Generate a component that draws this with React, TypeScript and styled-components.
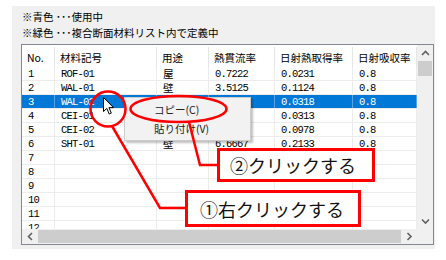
import styled, { createGlobalStyle } from "styled-components";

const GlobalStyle = createGlobalStyle`
  html, body {
    margin: 0;
    padding: 0;
    background: #ffffff;
  }
  body {
    font-family: "Noto Sans CJK JP", "Noto Sans", sans-serif;
    color: #000;
  }
`;

const UI_FONT = `"Noto Sans CJK JP", "Noto Sans", sans-serif`;
const DATA_FONT = `"Liberation Mono", "Noto Sans CJK JP", monospace`;
const RED = "#ff0000";

const Page = styled.div`
  position: relative;
  width: 446px;
  height: 260px;
  overflow: hidden;
`;

const Panel = styled.div`
  margin: 6px 0 0 12px;
  width: 423px;
  height: 243px;
  box-sizing: border-box;
  padding: 3px 0 0 9px;
  background: #f0f0f0;
`;

const Note = styled.div`
  padding-left: 1px;
  font-family: ${UI_FONT};
  font-size: 10.5px;
  line-height: 16px;
  height: 16px;
  white-space: nowrap;
`;

const Table = styled.div`
  margin-top: 3px;
  width: 413px;
  height: 201px;
  box-sizing: border-box;
  border: 1px solid #828790;
  background: #ffffff;
  display: grid;
  grid-template-columns: 395px 16px;
  grid-template-rows: 184px 15px;
`;

const GridArea = styled.div`
  overflow: hidden;
  background: #ffffff;
`;

const COLS = "33px 102px 52px 66px 78px 64px";

const HeaderRow = styled.div`
  display: grid;
  grid-template-columns: ${COLS};
  height: 22px;
`;

const HeaderCell = styled.div`
  display: flex;
  align-items: center;
  padding-left: 5px;
  box-sizing: border-box;
  font-family: ${UI_FONT};
  font-size: 10.5px;
  white-space: nowrap;
  overflow: hidden;
  border-right: 1px solid #e5e5e5;
  margin: 2px 0 0;
`;

const Row = styled.div<{ $selected?: boolean }>`
  display: grid;
  grid-template-columns: ${COLS};
  height: 14px;
  box-sizing: border-box;
  border-bottom: 1px solid #ececec;
  background: ${(p) => (p.$selected ? "#0078d7" : "#ffffff")};
  color: ${(p) => (p.$selected ? "#ffffff" : "#000000")};
`;

const Cell = styled.div<{ $selected?: boolean }>`
  display: flex;
  align-items: center;
  padding-left: 6px;
  box-sizing: border-box;
  font-family: ${DATA_FONT};
  font-size: 10.5px;
  letter-spacing: -0.8px;
  white-space: nowrap;
  overflow: hidden;
  border-right: 1px solid ${(p) => (p.$selected ? "#5aa3e0" : "#ececec")};
`;

const VScroll = styled.div`
  background: #f0f0f0;
  display: flex;
  flex-direction: column;
`;

const HScroll = styled.div`
  background: #f0f0f0;
  display: flex;
  align-items: center;
`;

const ScrollButton = styled.div<{ $w: number; $h: number }>`
  width: ${(p) => p.$w}px;
  height: ${(p) => p.$h}px;
  flex: none;
  display: flex;
  align-items: center;
  justify-content: center;
`;

const VThumb = styled.div`
  margin-left: 1px;
  width: 14px;
  height: 15px;
  background: #cdcdcd;
`;

const VTrack = styled.div`
  flex: 1;
`;

const HThumb = styled.div`
  flex: 1;
  height: 13px;
  background: #cdcdcd;
`;

const Corner = styled.div`
  background: #f0f0f0;
`;

const Menu = styled.div`
  position: absolute;
  left: 124px;
  top: 97px;
  width: 127px;
  box-sizing: border-box;
  padding: 2px 0;
  background: #f2f2f2;
  border: 1px solid #cccccc;
  box-shadow: 2px 2px 2px rgba(0, 0, 0, 0.25);
`;

const MenuItem = styled.div`
  height: 19px;
  display: flex;
  align-items: center;
  padding-left: 29px;
  font-family: ${UI_FONT};
  font-size: 10.5px;
  color: #222;
  white-space: nowrap;
`;

const Cursor = styled.svg`
  position: absolute;
  left: 103px;
  top: 97px;
`;

const Marks = styled.svg`
  position: absolute;
  left: 0;
  top: 0;
  pointer-events: none;
`;

const Callout = styled.div<{ $x: number; $y: number; $w: number; $h: number; $pad: number }>`
  position: absolute;
  left: ${(p) => p.$x}px;
  top: ${(p) => p.$y}px;
  width: ${(p) => p.$w}px;
  height: ${(p) => p.$h}px;
  box-sizing: border-box;
  border: 3px solid ${RED};
  background: #ffffff;
  display: flex;
  align-items: center;
  padding-left: ${(p) => p.$pad}px;
  font-family: ${UI_FONT};
  font-size: 18px;
  color: #111;
  white-space: nowrap;
`;

type Material = {
  no: number;
  code: string;
  use: string;
  u: string;
  eta: string;
  a: string;
};

const materials: Material[] = [
  { no: 1, code: "ROF-01", use: "屋", u: "0.7222", eta: "0.0231", a: "0.8" },
  { no: 2, code: "WAL-01", use: "壁", u: "3.5125", eta: "0.1124", a: "0.8" },
  { no: 3, code: "WAL-02", use: "壁", u: "1.0256", eta: "0.0318", a: "0.8" },
  { no: 4, code: "CEI-01", use: "天", u: "0.9921", eta: "0.0313", a: "0.8" },
  { no: 5, code: "CEI-02", use: "天", u: "2.4450", eta: "0.0978", a: "0.8" },
  { no: 6, code: "SHT-01", use: "壁", u: "6.6667", eta: "0.2133", a: "0.8" },
  ...[7, 8, 9, 10, 11, 12].map((no) => ({ no, code: "", use: "", u: "", eta: "", a: "" })),
];

const headers = ["No.", "材料記号", "用途", "熱貫流率", "日射熱取得率", "日射吸収率"];

const Chevron = ({ dir }: { dir: "up" | "down" | "left" | "right" }) => {
  const pts = {
    up: "1,5 4.5,1.5 8,5",
    down: "1,1.5 4.5,5 8,1.5",
    left: "5,1 1.5,4.5 5,8",
    right: "1.5,1 5,4.5 1.5,8",
  }[dir];
  const vertical = dir === "up" || dir === "down";
  return (
    <svg width={vertical ? 9 : 7} height={vertical ? 7 : 9}>
      <polyline points={pts} fill="none" stroke="#606060" strokeWidth="1.6" />
    </svg>
  );
};

const App = () => {
  return (
    <Page>
      <GlobalStyle />
      <Panel>
        <Note>※青色 ･･･使用中</Note>
        <Note>※緑色 ･･･複合断面材料リスト内で定義中</Note>
        <Table>
          <GridArea>
            <HeaderRow>
              {headers.map((h) => (
                <HeaderCell key={h}>{h}</HeaderCell>
              ))}
            </HeaderRow>
            {materials.map((m) => {
              const sel = m.no === 3;
              return (
                <Row key={m.no} $selected={sel}>
                  <Cell $selected={sel}>{m.no}</Cell>
                  <Cell $selected={sel}>{m.code}</Cell>
                  <Cell $selected={sel}>{m.use}</Cell>
                  <Cell $selected={sel}>{m.u}</Cell>
                  <Cell $selected={sel}>{m.eta}</Cell>
                  <Cell $selected={sel}>{m.a}</Cell>
                </Row>
              );
            })}
          </GridArea>
          <VScroll>
            <ScrollButton $w={16} $h={16}>
              <Chevron dir="up" />
            </ScrollButton>
            <VThumb />
            <VTrack />
            <ScrollButton $w={16} $h={16}>
              <Chevron dir="down" />
            </ScrollButton>
          </VScroll>
          <HScroll>
            <ScrollButton $w={16} $h={15}>
              <Chevron dir="left" />
            </ScrollButton>
            <HThumb />
            <ScrollButton $w={16} $h={15}>
              <Chevron dir="right" />
            </ScrollButton>
          </HScroll>
          <Corner />
        </Table>
      </Panel>

      <Menu>
        <MenuItem>コピー(C)</MenuItem>
        <MenuItem>貼り付け(V)</MenuItem>
      </Menu>

      <Cursor width="13" height="19" viewBox="0 0 13 19">
        <path
          d="M0.5,0.5 L0.5,14.5 L3.8,11.4 L6.2,17 L8.3,16.1 L6,10.6 L10.5,10.6 Z"
          fill="#ffffff"
          stroke="#000000"
          strokeWidth="1"
          strokeLinejoin="round"
        />
      </Cursor>

      <Marks width="446" height="260" viewBox="0 0 446 260">
        <circle cx="108" cy="109" r="17.5" fill="none" stroke={RED} strokeWidth="2.5" />
        <ellipse cx="178.5" cy="109" rx="48" ry="13" fill="none" stroke={RED} strokeWidth="2.5" />
        <polyline points="112,126 160,208 186,208" fill="none" stroke={RED} strokeWidth="2.5" />
        <polyline points="189,122 200,165 218,165" fill="none" stroke={RED} strokeWidth="2.5" />
      </Marks>

      <Callout $x={217} $y={148} $w={158} $h={34} $pad={10}>
        ②クリックする
      </Callout>
      <Callout $x={185} $y={190} $w={176} $h={37} $pad={12}>
        ①右クリックする
      </Callout>
    </Page>
  );
};

export default App;
